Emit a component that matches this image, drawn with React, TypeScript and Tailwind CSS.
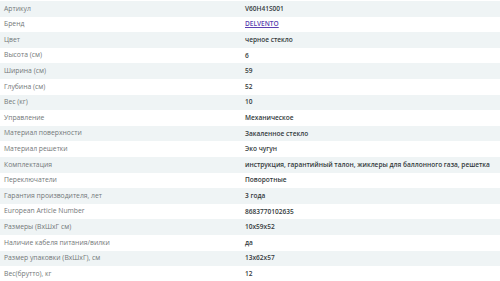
const rows: [string, string][] = [
  ['Артикул', 'V60H41S001'],
  ['Бренд', 'DELVENTO'],
  ['Цвет', 'черное стекло'],
  ['Высота (см)', '6'],
  ['Ширина (см)', '59'],
  ['Глубина (см)', '52'],
  ['Вес (кг)', '10'],
  ['Управление', 'Механическое'],
  ['Материал поверхности', 'Закаленное стекло'],
  ['Материал решетки', 'Эко чугун'],
  ['Комплектация', 'инструкция, гарантийный талон, жиклеры для баллонного газа, решетка'],
  ['Переключатели', 'Поворотные'],
  ['Гарантия производителя, лет', '3 года'],
  ['European Article Number', '8683770102635'],
  ['Размеры (ВхШхГ см)', '10x59x52'],
  ['Наличие кабеля питания/вилки', 'да'],
  ['Размер упаковки (ВхШхГ), см', '13x62x57'],
  ['Вес(брутто), кг', '12'],
];

export default function App() {
  return (
    <div className="w-[500px] h-[281px] bg-white overflow-hidden pt-[1px] font-['Open_Sans',sans-serif]">
      {rows.map(([label, value], i) => (
        <div
          key={label}
          className={`grid grid-cols-[241px_1fr] items-center h-[15.6px] ${i % 2 === 0 ? 'bg-[#eff4f5]' : 'bg-white'}`}
        >
          <div className="pl-[4px] text-[6.8px] text-[#737879] whitespace-nowrap">{label}</div>
          <div className="pl-[4px] text-[6.55px] font-semibold text-[#333a3c] whitespace-nowrap">
            {label === 'Бренд' ? (
              <a href="#" className="text-[#5b3fb0] underline">{value}</a>
            ) : (
              value
            )}
          </div>
        </div>
      ))}
    </div>
  );
}
